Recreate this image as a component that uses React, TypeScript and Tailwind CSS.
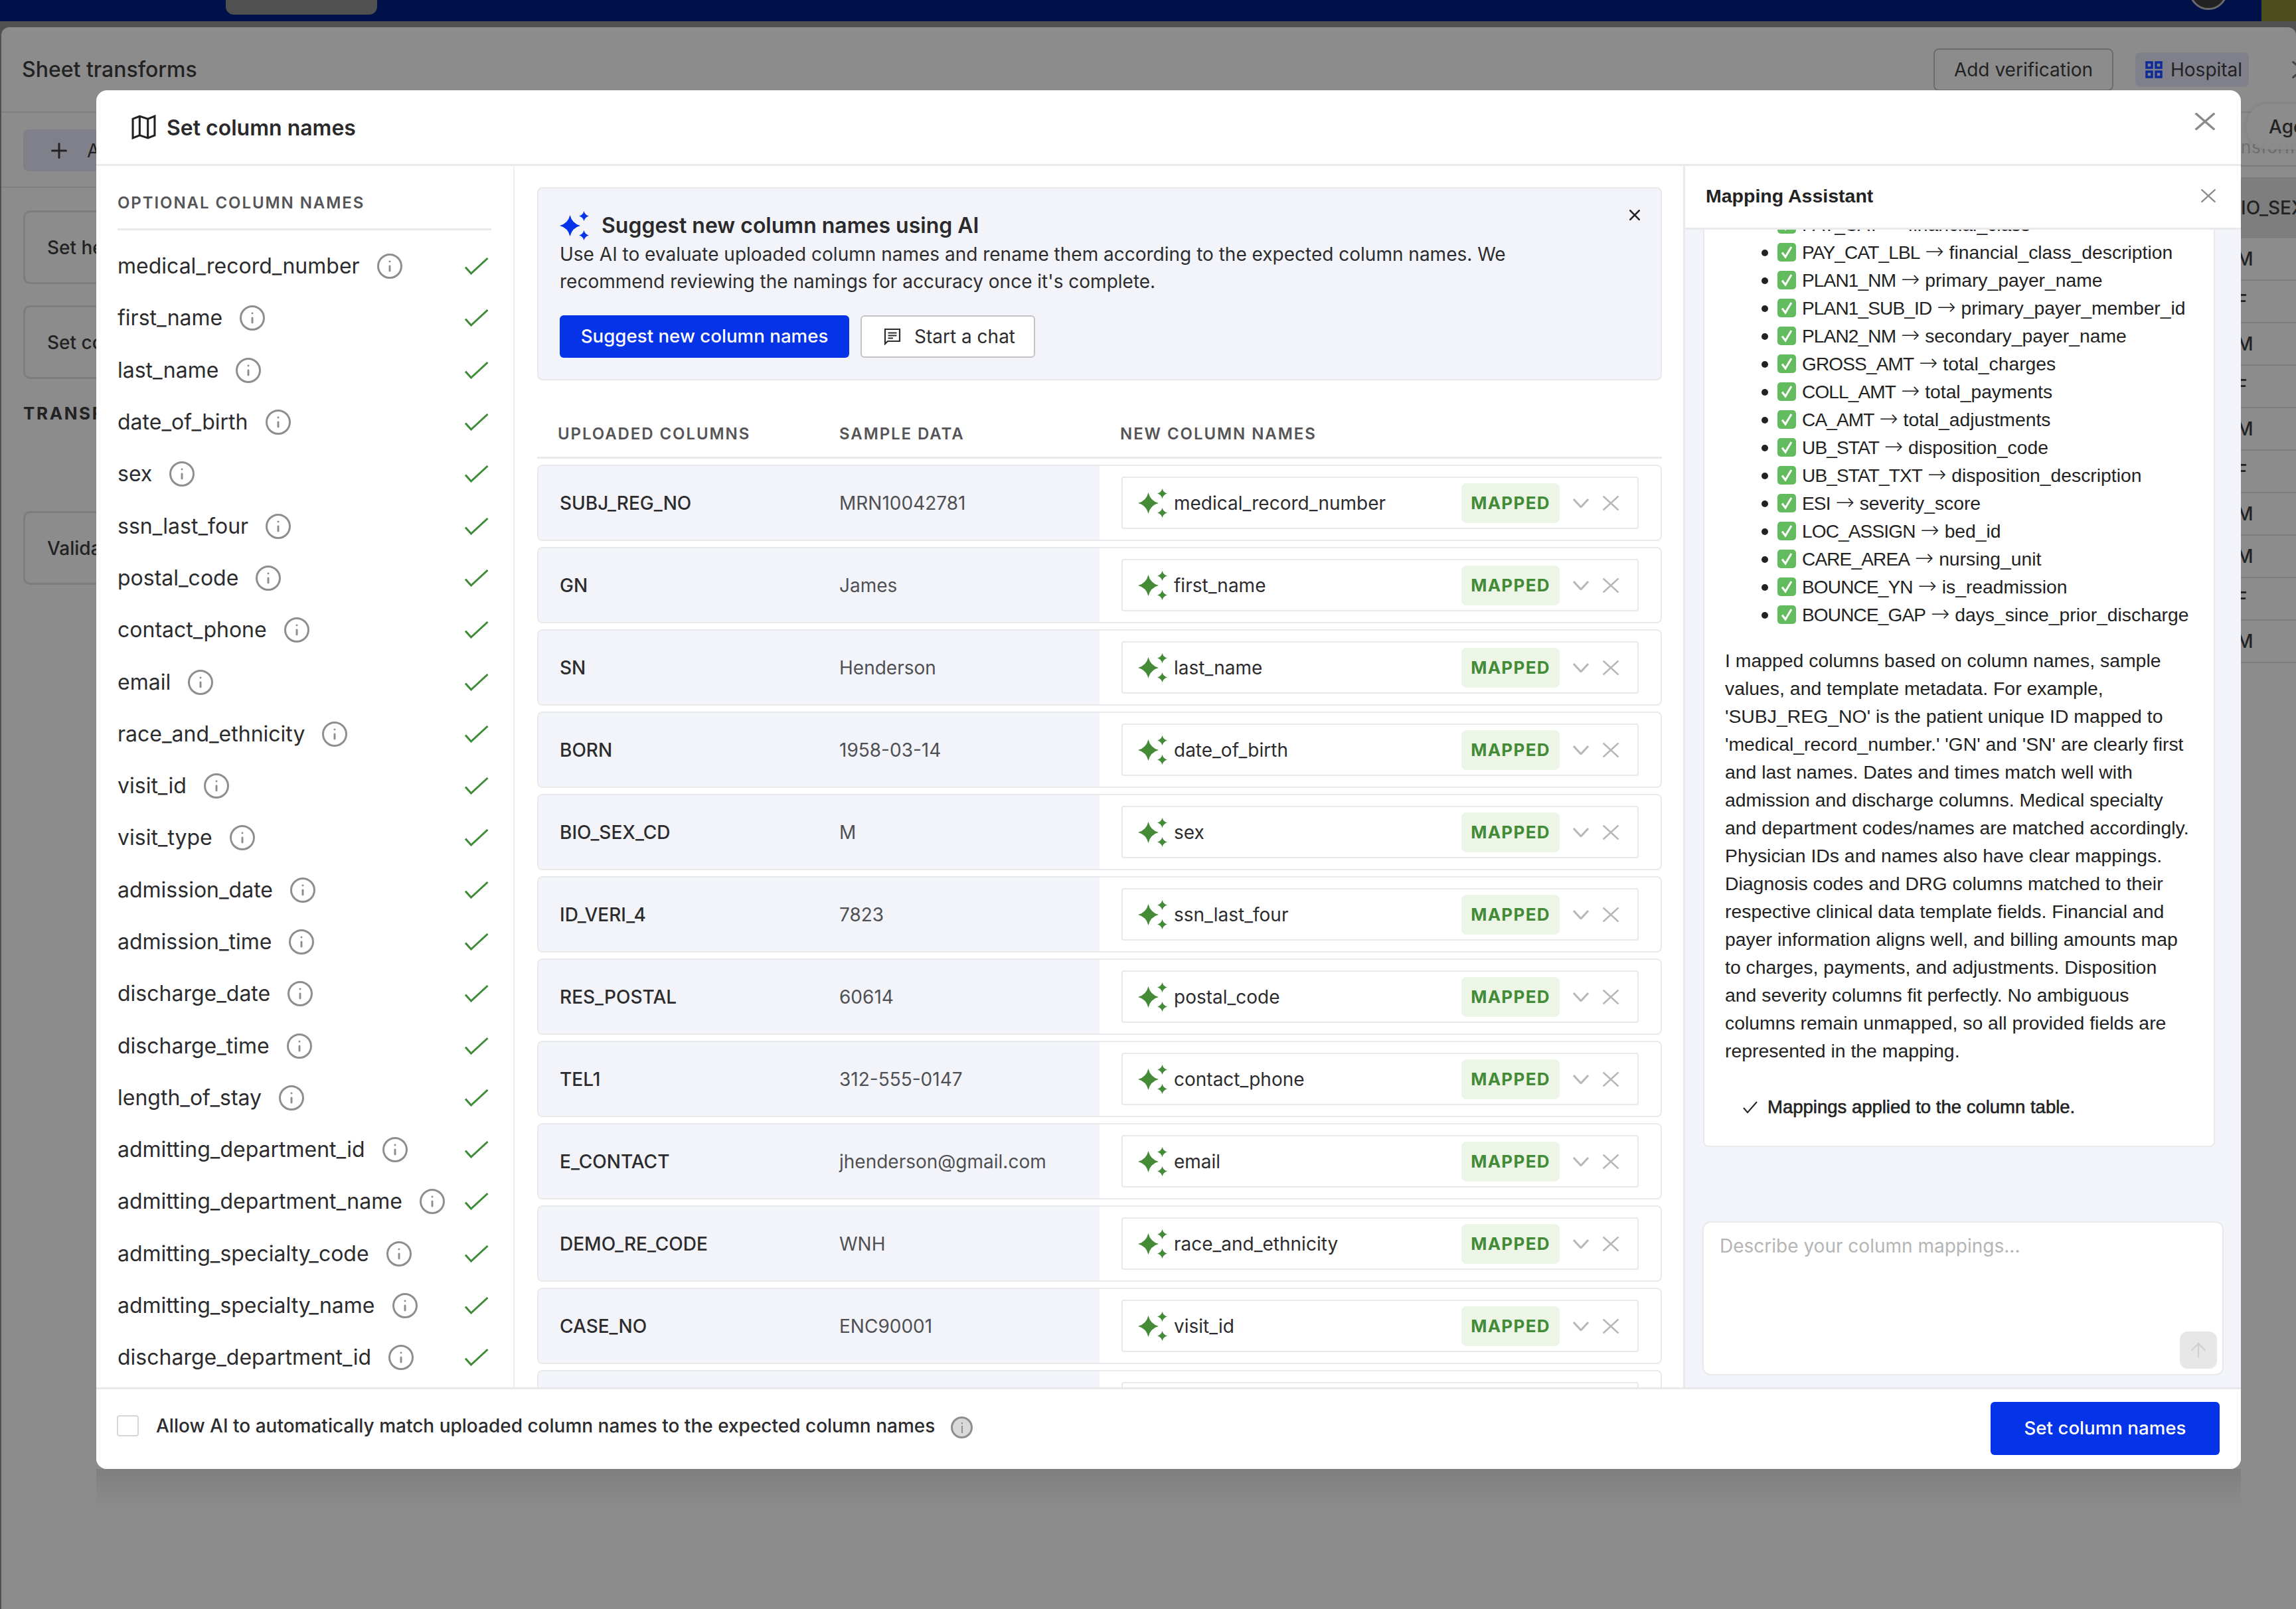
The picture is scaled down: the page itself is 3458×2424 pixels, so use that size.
import React from "react";
import { Info, ArrowUp, Plus } from "lucide-react";

const optional = ["medical_record_number","first_name","last_name","date_of_birth","sex","ssn_last_four","postal_code","contact_phone","email","race_and_ethnicity","visit_id","visit_type","admission_date","admission_time","discharge_date","discharge_time","length_of_stay","admitting_department_id","admitting_department_name","admitting_specialty_code","admitting_specialty_name","discharge_department_id"];

const rows: [string,string,string][] = [
  ["SUBJ_REG_NO","MRN10042781","medical_record_number"],
  ["GN","James","first_name"],
  ["SN","Henderson","last_name"],
  ["BORN","1958-03-14","date_of_birth"],
  ["BIO_SEX_CD","M","sex"],
  ["ID_VERI_4","7823","ssn_last_four"],
  ["RES_POSTAL","60614","postal_code"],
  ["TEL1","312-555-0147","contact_phone"],
  ["E_CONTACT","jhenderson@gmail.com","email"],
  ["DEMO_RE_CODE","WNH","race_and_ethnicity"],
  ["CASE_NO","ENC90001","visit_id"],
  ["","",""],
];

const mappings: [string,string][] = [
  ["PAY_CAT","financial_class"],["PAY_CAT_LBL","financial_class_description"],["PLAN1_NM","primary_payer_name"],["PLAN1_SUB_ID","primary_payer_member_id"],["PLAN2_NM","secondary_payer_name"],["GROSS_AMT","total_charges"],["COLL_AMT","total_payments"],["CA_AMT","total_adjustments"],["UB_STAT","disposition_code"],["UB_STAT_TXT","disposition_description"],["ESI","severity_score"],["LOC_ASSIGN","bed_id"],["CARE_AREA","nursing_unit"],["BOUNCE_YN","is_readmission"],["BOUNCE_GAP","days_since_prior_discharge"],
];

const prose = [
  "I mapped columns based on column names, sample",
  "values, and template metadata. For example,",
  "'SUBJ_REG_NO' is the patient unique ID mapped to",
  "'medical_record_number.' 'GN' and 'SN' are clearly first",
  "and last names. Dates and times match well with",
  "admission and discharge columns. Medical specialty",
  "and department codes/names are matched accordingly.",
  "Physician IDs and names also have clear mappings.",
  "Diagnosis codes and DRG columns matched to their",
  "respective clinical data template fields. Financial and",
  "payer information aligns well, and billing amounts map",
  "to charges, payments, and adjustments. Disposition",
  "and severity columns fit perfectly. No ambiguous",
  "columns remain unmapped, so all provided fields are",
  "represented in the mapping.",
];

const sexes = ["M","F","M","F","M","F","M","M","F","M"];

function Sparkle({ color, className }: { color: string; className: string }) {
  const star = (cx: number, cy: number, rx: number, ry: number) =>
    `M${cx} ${cy-ry}Q${cx+rx*0.2} ${cy-ry*0.2} ${cx+rx} ${cy}Q${cx+rx*0.2} ${cy+ry*0.2} ${cx} ${cy+ry}Q${cx-rx*0.2} ${cy+ry*0.2} ${cx-rx} ${cy}Q${cx-rx*0.2} ${cy-ry*0.2} ${cx} ${cy-ry}Z`;
  return (
    <svg viewBox="0 0 45 44" className={className} fill={color}>
      <path d={star(15.5, 22, 15.5, 16)} />
      <path d={star(36.5, 7.5, 7.5, 7.5)} />
      <path d={star(36.5, 36.5, 7.5, 7.5)} />
    </svg>
  );
}

function Cross({ className, color, sw }: { className: string; color: string; sw: number }) {
  return (
    <svg viewBox="0 0 100 100" preserveAspectRatio="none" className={className} fill="none" stroke={color}>
      <path d="M2 2L98 98M98 2L2 98" strokeWidth={sw} vectorEffect="non-scaling-stroke" />
    </svg>
  );
}

function GreenCheck() {
  return (
    <svg viewBox="0 0 36 26" className="w-[36px] h-[26px] shrink-0" fill="none" stroke="#3f8c38" strokeWidth="3">
      <path d="M1 14.5L9.5 24L34.5 1" />
    </svg>
  );
}

function EmojiCheck() {
  return (
    <svg viewBox="0 0 28 28" className="w-[28px] h-[28px] shrink-0">
      <rect x="0" y="0" width="28" height="28" rx="5" fill="#62bb5e" />
      <path d="M7 14.5L12 21L21 6" fill="none" stroke="#fff" strokeWidth="3" />
    </svg>
  );
}

function Row({ name, sample, target }: { name: string; sample: string; target: string }) {
  return (
    <div className="flex h-[115px] shrink-0 rounded-[8px] border-2 border-[#e8e9eb] overflow-hidden">
      <div className="w-[845px] shrink-0 bg-[#f3f4f9] flex items-center pl-[32px] text-[28px]">
        <span className="w-[421px] font-medium text-[#2c2c2e]">{name}</span>
        <span className="text-[#4f5054]">{sample}</span>
      </div>
      <div className="flex-1 bg-white flex items-center pl-[33px] pr-[33px]">
        <div className="flex-1 h-[79px] rounded-[4px] border-2 border-[#e8e9eb] flex items-center pl-[23px] pr-[28px]">
          {target ? (
            <>
              <Sparkle color="#438b37" className="w-[45px] h-[44px] shrink-0" />
              <span className="ml-[9px] flex-1 text-[28px] text-[#2c2c2e]">{target}</span>
              <span className="w-[148px] h-[60px] rounded-[8px] bg-[#edf6e6] flex items-center justify-center text-[26px] font-bold tracking-[0.05em] text-[#438b37]">MAPPED</span>
              <svg viewBox="0 0 24 14" className="ml-[20px] w-[24px] h-[14px]" fill="none" stroke="#b7b7b7" strokeWidth="3"><path d="M1 1L12 13L23 1" /></svg>
              <Cross className="ml-[21px] w-[24px] h-[22px]" color="#b7b7b7" sw={2.6} />
            </>
          ) : null}
        </div>
      </div>
    </div>
  );
}

export default function App() {
  return (
    <div className="relative w-[3458px] h-[2424px] overflow-hidden bg-[#505050] font-['Inter',sans-serif]">
      {/* top bar */}
      <div className="h-[32px] bg-[#00114a] flex relative overflow-hidden">
        <div className="ml-[340px] w-[228px] h-[22px] bg-[#505050] rounded-b-[12px]" />
        <div className="absolute left-[3297px] -top-[43px] w-[58px] h-[58px] rounded-full bg-[#222] border-[3px] border-[#6a6a6a]" />
        <div className="absolute left-[3406px] top-0 w-[52px] h-[32px] bg-[#4e4e1d]" />
      </div>
      <div className="h-[9px] bg-[#505050]" />

      {/* dimmed page behind */}
      <div className="relative ml-[2px] rounded-t-[12px] bg-[#8c8c8c] h-[2383px]">
        <div className="h-[129px] border-b-2 border-[#7f7f7f] flex items-start justify-between pl-[31px]">
          <span className="mt-[40px] text-[32px] font-medium text-[#222]">Sheet transforms</span>
          <div className="flex items-start">
            <div className="mt-[32px] w-[271px] h-[64px] rounded-[8px] border-2 border-[#6d6d6d] flex items-center justify-center text-[28px] text-[#222]">Add verification</div>
            <div className="mt-[38px] ml-[33px] w-[171px] h-[52px] rounded-[8px] bg-[#80808a] flex items-center pl-[15px] text-[28px] text-[#222]">
              <svg viewBox="0 0 26 26" className="w-[26px] h-[26px] mr-[12px]" fill="none" stroke="#0c2a9a" strokeWidth="3.5"><rect x="2" y="2" width="8" height="8"/><rect x="16" y="2" width="8" height="8"/><rect x="2" y="16" width="8" height="8"/><rect x="16" y="16" width="8" height="8"/></svg>
              Hospital
            </div>
            <Cross className="mt-[51px] ml-[65px] -mr-[24px] w-[30px] h-[26px] shrink-0" color="#444" sw={3} />
          </div>
        </div>
        <div className="h-[113px] border-b-2 border-[#7f7f7f] pl-[33px] pt-[25px]">
          <div className="w-[400px] h-[63px] rounded-[8px] bg-[#80808a] flex items-center pl-[36px] text-[28px] text-[#222]">
            <Plus className="w-[36px] h-[36px] mr-[24px]" strokeWidth={2} />Add
          </div>
        </div>
        <div className="pl-[33px] pt-[34px] flex flex-col">
          <div className="w-[400px] h-[111px] rounded-[10px] border-[3px] border-[#7d7d7d] flex items-center pl-[33px] text-[28px] font-medium text-[#222]">Set header</div>
          <div className="mt-[32px] w-[400px] h-[111px] rounded-[10px] border-[3px] border-[#7d7d7d] flex items-center pl-[33px] text-[28px] font-medium text-[#222]">Set columns</div>
          <div className="mt-[32px] text-[26px] font-bold tracking-[0.1em] text-[#222]">TRANSFORMS</div>
          <div className="mt-[128px] w-[400px] h-[111px] rounded-[10px] border-[3px] border-[#7d7d7d] flex items-center pl-[33px] text-[28px] font-medium text-[#222]">Validate</div>
        </div>

        {/* right table sliver */}
        <div className="absolute left-[3373px] top-[115px] w-[83px]">
          <div className="absolute left-[8px] top-[0px] w-[200px] h-[69px] rounded-[34px] bg-[#8c8c8c]/90 shadow-[0_0_6px_rgba(0,0,0,0.12)] pl-[34px] flex items-center text-[28px] font-medium text-[#222]">Age</div>
          <div className="pt-[46px] h-[95px] border-b-2 border-[#7a7a7a] overflow-hidden whitespace-nowrap text-[26px] tracking-[0.02em] text-[#6f6f6f]">nsforms</div>
          <div className="mt-[16px] h-[92px] bg-[#7e7e7e] flex items-center text-[28px] font-medium text-[#222] overflow-hidden whitespace-nowrap">IO_SEX</div>
          {sexes.map((s, i) => (
            <div key={i} className="h-[64px] border-b-2 border-[#7b7b82] flex items-center -indent-[7px] overflow-hidden text-[28px] font-medium text-[#222]">{s}</div>
          ))}
        </div>
      </div>

      {/* shadow region below modal */}
      <div className="absolute left-[145px] top-[2213px] w-[3230px] h-[60px] bg-gradient-to-b from-[#7f7f7f] to-[#8c8c8c]" />

      {/* modal */}
      <div className="absolute left-[145px] top-[136px] w-[3230px] h-[2077px] bg-white rounded-[16px] flex flex-col overflow-hidden">
        <div className="h-[114px] shrink-0 border-b-[3px] border-[#e8e9eb] flex items-center pl-[53px] pr-[38px] relative">
          <svg viewBox="0 0 36 36" className="w-[37px] h-[37px] mr-[16px]" fill="none" stroke="#222" strokeWidth="3"><path d="M2 6L12 2L24 6L34 2V30L24 34L12 30L2 34Z"/><path d="M12 2V30"/><path d="M24 6V34"/></svg>
          <span className="text-[32px] font-semibold text-[#2a2a2c] flex-1 pt-[2px]">Set column names</span>
          <Cross className="absolute left-[3161px] top-[34px] w-[30px] h-[26px]" color="#8a8a8a" sw={3.4} />
        </div>

        <div className="flex-1 flex min-h-0">
          {/* left column */}
          <div className="w-[630px] shrink-0 border-r-2 border-[#eeeff1] pl-[32px] pr-[33px] overflow-hidden">
            <div className="h-[97px] border-b-[3px] border-[#e8e9eb] flex items-center pt-[17px] text-[24px] font-semibold tracking-[0.08em] text-[#555558]">OPTIONAL COLUMN NAMES</div>
            <div className="pt-[15px] flex flex-col">
              {optional.map((n) => (
                <div key={n} className="h-[78.3px] shrink-0 flex items-center text-[32px] text-[#2c2c2e]">
                  <span>{n}</span>
                  <Info className="ml-[24px] w-[42px] h-[42px] text-[#8e8e8e]" strokeWidth={1.7} />
                  <span className="flex-1" />
                  <span className="mr-[4px]"><GreenCheck /></span>
                </div>
              ))}
            </div>
          </div>

          {/* middle */}
          <div className="flex-1 min-w-0 pl-[34px] pr-[32px] pt-[32px] overflow-hidden">
            <div className="relative h-[291px] rounded-[8px] border-2 border-[#e8e9eb] bg-[#f3f4f9] pl-[32px] pr-[40px] pt-[34px]">
              <div className="flex items-center h-[44px]">
                <Sparkle color="#0433e8" className="w-[45px] h-[44px] mr-[18px]" />
                <span className="text-[32px] font-semibold text-[#2a2a2c]">Suggest new column names using AI</span>
              </div>
              <p className="text-[28px] leading-[41px] text-[#2c2c2e] mt-[1px]">Use AI to evaluate uploaded column names and rename them according to the expected column names. We<br />recommend reviewing the namings for accuracy once it's complete.</p>
              <div className="flex mt-[30px]">
                <div className="w-[436px] h-[64px] rounded-[6px] bg-[#0433e8] flex items-center justify-center text-[27.7px] font-medium text-white">Suggest new column names</div>
                <div className="ml-[17px] w-[263px] h-[64px] rounded-[6px] border-2 border-[#c4c4c8] bg-white flex items-center pl-[33px] text-[28px] text-[#2c2c2e]">
                  <svg viewBox="0 0 26 26" className="w-[26px] h-[26px] mr-[20px]" fill="none" stroke="#2c2c2e" strokeWidth="2.2"><path d="M2 2H24V20H6L2 24Z"/><path d="M6.5 7.5H19.5M6.5 11.5H19.5M6.5 15.5H14"/></svg>
                  Start a chat
                </div>
              </div>
              <Cross className="absolute right-[31px] top-[32px] w-[16px] h-[16px]" color="#222" sw={2.6} />
            </div>
            <div className="mt-[60px] h-[58px] border-b-[3px] border-[#e8e9eb] flex text-[24px] font-semibold tracking-[0.08em] text-[#555558] pl-[31px] pt-[3px]">
              <span className="w-[424px]">UPLOADED COLUMNS</span>
              <span className="w-[423px]">SAMPLE DATA</span>
              <span>NEW COLUMN NAMES</span>
            </div>
            <div className="mt-[9px] flex flex-col gap-[9px]">
              {rows.map((r, i) => <Row key={i} name={r[0]} sample={r[1]} target={r[2]} />)}
            </div>
          </div>

          {/* assistant */}
          <div className="w-[840px] shrink-0 border-l-[3px] border-[#e8e9eb] flex flex-col bg-[#f3f4f9] font-['Liberation_Sans',sans-serif]">
            <div className="h-[96px] shrink-0 bg-white border-b-[3px] border-[#e8e9eb] flex items-center pl-[31px] pr-[38px] pb-[3px]">
              <span className="flex-1 text-[28.5px] font-bold text-[#222]">Mapping Assistant</span>
              <Cross className="w-[22px] h-[20px]" color="#8a8a8a" sw={2.4} />
            </div>
            <div className="h-[1382px] shrink-0 overflow-hidden pl-[27px] pr-[39px]">
              <div className="h-[1382px] bg-white border-2 border-t-0 border-[#e8e9eb] rounded-b-[8px] pl-[31px] overflow-hidden">
                <div className="-mt-[29px] text-[28px] leading-[42px] text-[#222]">
                  <div className="flex flex-col">
                    {mappings.map(([a, b]) => (
                      <div key={a} className="h-[42px] flex items-center whitespace-nowrap relative pl-[79px]">
                        <span className="absolute left-[55px] top-[17px] w-[10px] h-[10px] rounded-full bg-[#222]" />
                        <EmojiCheck />
                        <span className="ml-[9px]"><span className="tracking-[-0.03em]">{a}</span> <span className="font-['DejaVu_Sans',sans-serif] font-extralight text-[34px] leading-[32px]">→</span> <span className="text-[28.3px]">{b}</span></span>
                      </div>
                    ))}
                  </div>
                  <div className="mt-[27px] whitespace-nowrap text-[28.4px]">
                    {prose.map((l) => <div key={l}>{l}</div>)}
                  </div>
                  <div className="mt-[43px] flex items-center pl-[27px] text-[#222] text-[27.5px] [-webkit-text-stroke:0.6px_#222]">
                    <svg viewBox="0 0 22 20" className="w-[22px] h-[20px] mr-[15px]" fill="none" stroke="#222" strokeWidth="2"><path d="M1 11L7 18L21 2"/></svg>
                    Mappings applied to the column table.
                  </div>
                </div>
              </div>
            </div>
            <div className="flex-1" />
            <div className="relative mx-[26px] mb-[18px] h-[232px] rounded-[12px] border-2 border-[#e8e9eb] bg-white pl-[24px] pt-[14px] text-[28px] font-['Inter',sans-serif] text-[#b5b5b5]">
              Describe your column mappings...
              <div className="absolute right-[8px] bottom-[8px] w-[56px] h-[56px] rounded-[12px] bg-[#e7e7e7] flex items-center justify-center">
                <ArrowUp className="w-[34px] h-[34px] text-[#d0d0d0]" strokeWidth={1.6} />
              </div>
            </div>
          </div>
        </div>

        <div className="h-[123px] shrink-0 border-t-[3px] border-[#e8e9eb] flex items-center pl-[31px] pr-[32px] bg-white">
          <div className="mb-[10px] w-[33px] h-[32px] rounded-[4px] border-2 border-[#d7d7d9] bg-white" />
          <span className="mb-[10px] ml-[26px] text-[28px] font-medium text-[#2c2c2e]">Allow AI to automatically match uploaded column names to the expected column names</span>
          <span className="mb-[5px] ml-[24px] w-[33px] h-[33px] rounded-full bg-[#d9d9d9] border-[3px] border-[#8e8e8e] flex items-center justify-center">
            <svg viewBox="0 0 4 16" className="w-[4px] h-[16px]" fill="#8e8e8e"><rect x="1" y="0" width="2" height="2.5"/><rect x="1" y="5" width="2" height="11"/></svg>
          </span>
          <span className="flex-1" />
          <div className="mb-[2px] w-[345px] h-[80px] rounded-[6px] bg-[#0433e8] flex items-center justify-center text-[27.7px] font-medium text-white">Set column names</div>
        </div>
      </div>
    </div>
  );
}
